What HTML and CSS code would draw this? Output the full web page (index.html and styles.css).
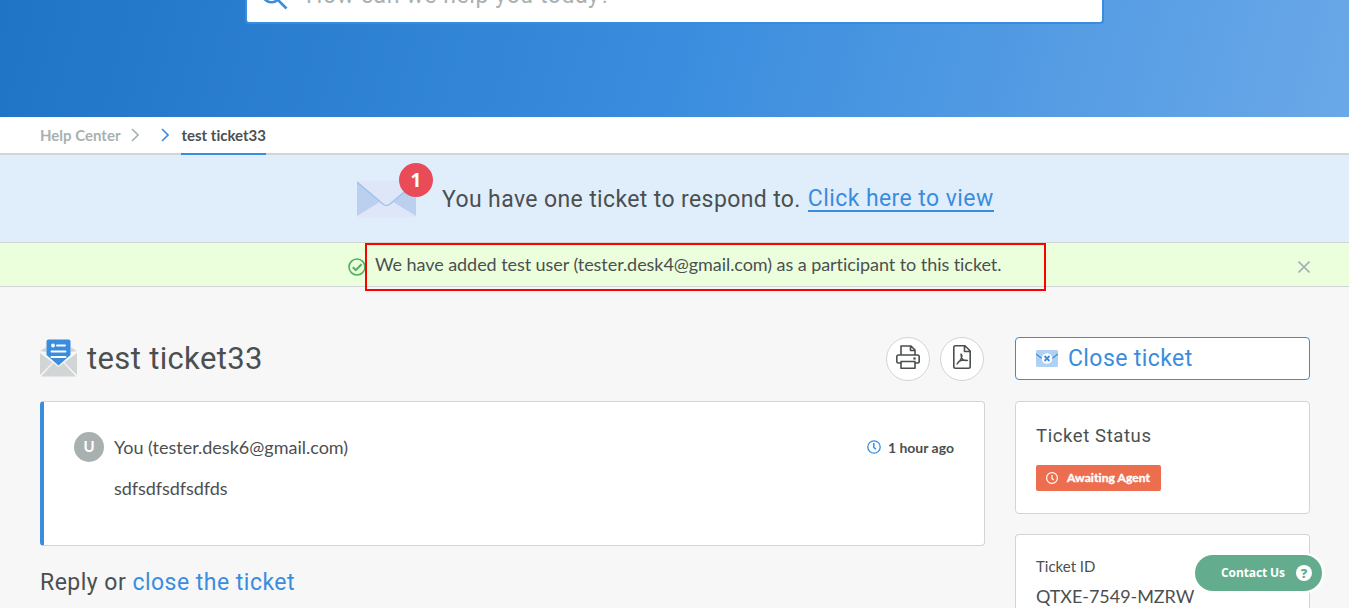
FILE: index.html
```html
<!DOCTYPE html>
<html lang="en">
<head>
<meta charset="utf-8">
<title>test ticket33 - Help Center</title>
<link rel="stylesheet" href="styles.css">
</head>
<body>
<header class="hero">
  <div class="search">
    <svg class="search-icon" width="27" height="27" viewBox="0 0 27 27" fill="none" stroke="#3a8dde" stroke-width="2.6"><circle cx="10.5" cy="10.5" r="8.8"/><path d="M17 17l8.5 8.5"/></svg>
    <span class="search-text">How can we help you today?</span>
  </div>
</header>
<nav class="crumbs">
  <span class="crumb">Help Center</span>
  <svg class="chev" width="8" height="14" viewBox="0 0 8 14" fill="none" stroke="#a8b1b0" stroke-width="1.6"><path d="M1 1l6 6-6 6"/></svg>
  <svg class="chev blue" width="8" height="14" viewBox="0 0 8 14" fill="none" stroke="#3a8dde" stroke-width="1.6"><path d="M1 1l6 6-6 6"/></svg>
  <span class="crumb current">test ticket33</span>
</nav>
<section class="notice">
  <div class="mail">
    <svg width="59" height="38" viewBox="0 0 60 38" preserveAspectRatio="none"><rect x=".5" y=".5" width="59" height="37" rx="1.5" fill="#dee6f7"/><path d="M0 2l23 20L0 36zM60 2L37 22l23 14z" fill="#bbcfef"/><path d="M0 2l27 22.500q3 2 6 0L60 2" fill="none" stroke="#9dc2ee" stroke-width="1.5"/></svg>
    <span class="badge">1</span>
  </div>
  <span class="notice-text">You have one ticket to respond to.</span>
  <a class="notice-link">Click here to view</a>
</section>
<section class="success">
  <svg class="tick" width="18" height="18" viewBox="0 0 18 18" fill="none" stroke="#4cb05c" stroke-width="1.6"><circle cx="9" cy="9" r="8"/><path d="M4.800 9.200l3 2.900 5.700-5.800" stroke-width="2"/></svg>
  <span class="success-text">We have added test user (tester.desk4@gmail.com) as a participant to this ticket.</span>
  <svg class="dismiss" width="12" height="12" viewBox="0 0 12 12" stroke="#a8b1b0" stroke-width="1.7"><path d="M.5.5l11 11M11.500.5l-11 11"/></svg>
  <div class="highlight"></div>
</section>
<main class="content">
  <div class="main-col">
    <div class="title-row">
      <svg class="title-icon" width="37" height="38" viewBox="0 0 37 38"><path d="M0 12l6.500-4v5zM37 12l-6.500-4v5z" fill="#d1d5d6"/><path d="M0 14l12.500 9.500L0 36zM37 14l-12.500 9.500L37 36z" fill="#d1d5d6"/><path d="M1 37.500L13.500 24l5 4 5-4L36 37.500z" fill="#d1d5d6"/><path d="M6.500 2.500Q6.500.5 8.500.5h20q2 0 2 2V16l-12 10.500L6.500 16z" fill="#3a8dde"/><circle cx="13" cy="6.500" r="1.900" fill="#fff"/><path d="M17 6.500h8M11.500 12.500h14M11.500 18h14" stroke="#fff" stroke-width="1.900" stroke-linecap="round"/></svg>
      <h1 class="title">test ticket33</h1>
      <div class="round"><svg width="24" height="24" viewBox="0 0 24 24" fill="none" stroke="#4a4f4f" stroke-width="1.600" stroke-linejoin="round"><path d="M5 10V1h10l4 4v5M14.500 1v4.500H19"/><path d="M5 18H2.500Q.8 18 .8 16.300v-4.600Q.8 10 2.500 10h19q1.700 0 1.700 1.700v4.600q0 1.700-1.700 1.700H19"/><path d="M5 16.500h14v6.700H5z"/><circle cx="18.500" cy="13.500" r=".5" fill="#4a4f4f"/></svg></div>
      <div class="round"><svg width="18" height="24" viewBox="0 0 18 24" fill="none" stroke="#4a4f4f" stroke-width="1.600" stroke-linejoin="round"><path d="M2.500.8h9.500l5.200 5.200v15.500q0 1.700-1.700 1.700h-13Q.8 23.200.8 21.500v-19Q.8.8 2.500.8zM11.500 1v5.500H17"/><path d="M8 9c2.200 1 .5 5.500-4 10 1.500-3 5.500-4.700 10.500-3.500-3.500 1-7-2-6.500-6.500z" stroke-width="1.300"/></svg></div>
    </div>
    <article class="message">
      <div class="avatar">U</div>
      <div class="message-body">
        <div class="message-head">
          <span>You (tester.desk6@gmail.com)</span>
          <span class="when"><svg class="when-icon" width="14" height="14" viewBox="0 0 14 14" fill="none" stroke="#3a8dde" stroke-width="1.300"><circle cx="7" cy="7" r="6.200"/><path d="M6.800 3v4.500L9 9.200" stroke-width="1.500"/></svg><span class="when-text">1 hour ago</span></span>
        </div>
        <p class="message-text">sdfsdfsdfsdfds</p>
      </div>
    </article>
    <h2 class="reply">Reply or <a class="reply-link">close the ticket</a></h2>
  </div>
  <aside class="side">
    <button class="close-btn"><svg width="22" height="17" viewBox="0 0 22 17"><rect width="22" height="17" rx="1.500" fill="#b0d1f3"/><path d="M0 4l6 4.500M22 4l-6 4.500" stroke="#3a8dde" stroke-width="1.200"/><circle cx="11" cy="8.500" r="5.300" fill="#fff"/><path d="M8.500 6l5 5M13.500 6l-5 5" stroke="#3a8dde" stroke-width="1.800"/></svg><span>Close ticket</span></button>
    <div class="card status">
      <h3 class="card-title">Ticket Status</h3>
      <span class="tag"><svg width="12" height="12" viewBox="0 0 12 12" fill="none" stroke="#fff" stroke-width="1.200"><circle cx="6" cy="6" r="5.400"/><path d="M6 3v3.500l1.700 1.500"/></svg><span class="tag-text">Awaiting Agent</span></span>
    </div>
    <div class="card ident">
      <div class="id-label">Ticket ID</div>
      <div class="id-value">QTXE-7549-MZRW</div>
    </div>
  </aside>
</main>
<div class="contact"><span class="contact-text">Contact Us</span><span class="q">?</span></div>
</body>
</html>
```

FILE: styles.css
```css
* { box-sizing: border-box; }
body { margin: 0; height: 608px; overflow: hidden; position: relative; background: #f7f7f7; color: #4c4f50; font-family: Lato, sans-serif; font-variant-ligatures: none; }
svg { display: block; flex: none; }
h1, h2, h3, p { margin: 0; font-weight: 400; }
.hero { height: 117px; display: flex; justify-content: center; align-items: flex-start; background: linear-gradient(105deg, #2074c5 0%, #3a8dde 50%, #6aa8e8 100%); }
.search { width: 859px; height: 64px; margin-top: -40px; border: 2px solid #3a8dde; border-radius: 4px; background: #fff; display: flex; align-items: center; padding-left: 14px; }
.search-icon { margin-top: 9px; }
.search-text { margin: 7px 0 0 18px; font: 23px Roboto, sans-serif; letter-spacing: .6px; color: #a8b1b0; }
.crumbs { height: 38px; padding-left: 40px; background: #fff; border-bottom: 2px solid #d1d5d6; display: flex; align-items: flex-start; font-size: 15px; font-weight: 700; line-height: 36px; }
.crumb { color: #a8b1b0; height: 38px; }
.current { color: #4c4f50; border-bottom: 2px solid #3a8dde; margin-left: 12px; }
.chev { margin: 11px 0 0 11px; }
.blue { margin-left: 22px; }
.notice { height: 87px; background: #e0eefc; display: flex; align-items: center; padding-left: 357px; white-space: nowrap; font: 23px Roboto, sans-serif; }
.mail { position: relative; width: 60px; margin: 1px 25px 0 0; }
.badge { position: absolute; left: 42px; top: -17px; width: 34px; height: 34px; border-radius: 50%; background: #e94b58; color: #fff; font: 700 19px/34px "Open Sans", sans-serif; text-align: center; }
.notice-text { letter-spacing: .38px; margin: 1px 7px 0 0; }
.notice-link { color: #3a8dde; letter-spacing: .42px; line-height: 24px; height: 25px; margin-top: 1px; border-bottom: 2px solid #3a8dde; }
.success { position: relative; height: 45px; border: solid #d1d5d6; border-width: 1px 0; background: #ebffdd; display: flex; align-items: center; padding: 0 39px 0 348px; font-size: 18px; }
.tick { margin: 4px 10px 0 0; }
.success-text { flex: 1; line-height: 24px; margin: -2px 0 0 -1px; letter-spacing: -.06px; }
.dismiss { margin: 5px 0 0; }
.highlight { position: absolute; left: 365px; top: 0; width: 681px; height: 48px; border: 2px solid #f00; }
.content { display: flex; gap: 30px; padding: 50px 39px 0 40px; }
.main-col { width: 945px; }
.title-row { height: 44px; display: flex; align-items: center; gap: 10px; padding-right: 1px; }
.title-icon { margin-top: -2px; }
.title { flex: 1; margin-top: -1px; font: 31px Roboto, sans-serif; letter-spacing: .35px; }
.round { width: 44px; height: 44px; border: 1px solid #d1d5d6; border-radius: 50%; background: #fff; display: flex; align-items: center; justify-content: center; padding-bottom: 4px; }
.message { height: 145px; margin-top: 20px; border: 1px solid #d1d5d6; border-left: 4px solid #3a8dde; border-radius: 4px; background: #fff; display: flex; gap: 10px; padding: 29px 30px 0 30px; font-size: 18px; }
.avatar { width: 30px; height: 30px; margin-top: 1px; border-radius: 50%; background: #a8b1b0; color: #fff; font: 700 15px/29px Lato, sans-serif; text-align: center; }
.message-body { flex: 1; }
.message-head { display: flex; justify-content: space-between; line-height: 32px; }
.when { display: flex; align-items: center; gap: 7px; font-size: 14px; font-weight: 700; }
.when-icon { margin-top: -1px; }
.when-text { padding-top: 1px; }
.message-text { margin-top: 8px; line-height: 32px; letter-spacing: -.05px; }
.reply { margin-top: 23px; font: 23px/28px Roboto, sans-serif; letter-spacing: .48px; }
.reply-link { color: #3a8dde; }
.side { width: 295px; }
.close-btn { width: 295px; height: 43px; padding: 0 0 0 20px; border: 1px solid #3a8dde; border-radius: 4px; background: #fff; color: #3a8dde; display: flex; align-items: center; gap: 10px; font: 23px Roboto, sans-serif; letter-spacing: .4px; }
.card { border: 1px solid #d1d5d6; border-radius: 4px; background: #fff; padding-left: 20px; }
.status { height: 113px; margin-top: 21px; padding-top: 22px; }
.card-title { font: 18.5px/24px Roboto, sans-serif; letter-spacing: .6px; }
.tag { margin-top: 17px; width: 125px; height: 26px; border-radius: 2px; background: #ed6d4f; color: #fff; display: flex; align-items: center; padding-left: 10px; gap: 9px; font-size: 12px; font-weight: 700; white-space: nowrap; }
.tag-text { margin-top: -2px; letter-spacing: .08px; -webkit-text-stroke: .4px #fff; }
.ident { height: 74px; margin-top: 20px; padding-top: 19px; border-bottom: 0; border-radius: 4px 4px 0 0; }
.id-label { font-size: 15px; line-height: 24px; }
.id-value { font-size: 18px; line-height: 24px; margin-top: 6px; letter-spacing: -.05px; }
.contact { position: absolute; left: 1195px; top: 555px; width: 127px; height: 36px; border-radius: 18px; background: #63ad8e; box-shadow: 1px 0 0 2px #fff; color: #fff; display: flex; align-items: center; padding-left: 26px; gap: 11px; font: 700 12px "Open Sans", sans-serif; white-space: nowrap; }
.contact-text { margin-top: -2px; letter-spacing: -.1px; }
.q { width: 16px; height: 16px; border-radius: 50%; background: #fff; color: #63ad8e; font: 800 13px/16px "Open Sans", sans-serif; text-align: center; }
```
